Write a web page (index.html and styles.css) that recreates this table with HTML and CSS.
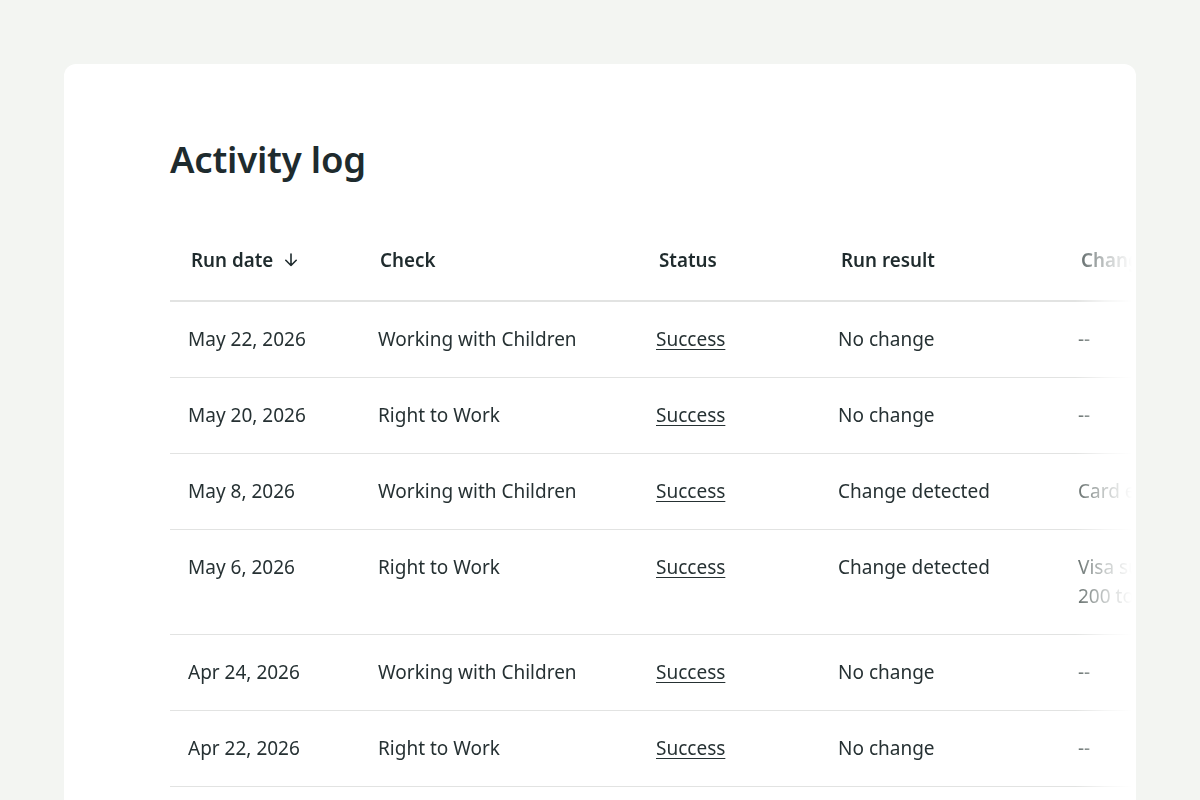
FILE: index.html
```html
<!DOCTYPE html>
<html lang="en">
<head>
<meta charset="utf-8">
<title>Activity log</title>
<link rel="stylesheet" href="styles.css">
</head>
<body>
<main class="card">
  <h1 class="title">Activity log</h1>
  <div class="table-wrap">
    <table class="log">
      <colgroup>
        <col class="c-date"><col class="c-check"><col class="c-status"><col class="c-result"><col class="c-change">
      </colgroup>
      <thead>
        <tr>
          <th><span class="sort">Run date
            <svg class="arrow" width="16" height="16" viewBox="0 0 16 16" aria-hidden="true"><path d="M8 2v11.5M2.8 8.3L8 13.5l5.2-5.2" fill="none" stroke="#1f2b2d" stroke-width="1.6" stroke-linecap="round" stroke-linejoin="round"/></svg></span></th>
          <th>Check</th>
          <th>Status</th>
          <th>Run result</th>
          <th>Changes</th>
        </tr>
      </thead>
      <tbody>
        <tr><td>May 22, 2026</td><td>Working with Children</td><td><a href="#">Success</a></td><td>No change</td><td class="muted">--</td></tr>
        <tr><td>May 20, 2026</td><td>Right to Work</td><td><a href="#">Success</a></td><td>No change</td><td class="muted">--</td></tr>
        <tr><td>May 8, 2026</td><td>Working with Children</td><td><a href="#">Success</a></td><td>Change detected</td><td class="muted">Card expiry updated</td></tr>
        <tr><td>May 6, 2026</td><td>Right to Work</td><td><a href="#">Success</a></td><td>Change detected</td><td class="muted">Visa subclass changed from<br>200 to 482</td></tr>
        <tr><td>Apr 24, 2026</td><td>Working with Children</td><td><a href="#">Success</a></td><td>No change</td><td class="muted">--</td></tr>
        <tr><td>Apr 22, 2026</td><td>Right to Work</td><td><a href="#">Success</a></td><td>No change</td><td class="muted">--</td></tr>
        <tr><td>Apr 10, 2026</td><td>Working with Children</td><td><a href="#">Success</a></td><td>No change</td><td class="muted">--</td></tr>
      </tbody>
    </table>
  </div>
</main>
</body>
</html>
```

FILE: styles.css
```css
html, body {
  margin: 0;
  padding: 0;
  background: #f3f5f2;
  overflow: hidden;
  height: 800px;
}

body {
  font-family: "Noto Sans", "Open Sans", sans-serif;
  color: #1f2b2d;
}

.card {
  margin: 64px 64px 0 64px;
  background: #ffffff;
  border-radius: 12px;
  padding: 73px 0 120px 106px;
  min-height: 900px;
  box-sizing: border-box;
}

.title {
  margin: 0;
  font-size: 36.5px;
  line-height: 44px;
  font-weight: 600;
  color: #1e2b2e;
  letter-spacing: -0.2px;
}

.table-wrap {
  margin-top: 66px;
  overflow: hidden;
  -webkit-mask-image: linear-gradient(to right, #000 0, #000 905px, rgba(0,0,0,0.35) 935px, transparent 962px);
  mask-image: linear-gradient(to right, #000 0, #000 905px, rgba(0,0,0,0.35) 935px, transparent 962px);
}

.log {
  border-collapse: collapse;
  table-layout: fixed;
  width: 1200px;
  font-size: 19px;
}

.c-date { width: 190px; }
.c-check { width: 278px; }
.c-status { width: 182px; }
.c-result { width: 240px; }
.c-change { width: 310px; }

.log th {
  text-align: left;
  font-weight: 600;
  font-size: 18.8px;
  line-height: 26px;
  padding: 0 0 27px 21px;
  border-bottom: 2px solid #e2e3e2;
  color: #1f2b2d;
  white-space: nowrap;
}

.log th:nth-child(2) { padding-left: 20px; }
.log th:last-child { color: #4f5a5a; }

.sort {
  display: inline-flex;
  align-items: center;
  gap: 10px;
}

.arrow { display: block; }

.log td {
  vertical-align: top;
  padding: 23px 18px 23px 18px;
  line-height: 29px;
  border-bottom: 1px solid #e2e3e2;
  color: #263133;
}

.log td.muted { color: #5f6967; }

.log a {
  color: #263133;
  text-decoration: underline;
  text-underline-offset: 3px;
  text-decoration-thickness: 1px;
}
```
